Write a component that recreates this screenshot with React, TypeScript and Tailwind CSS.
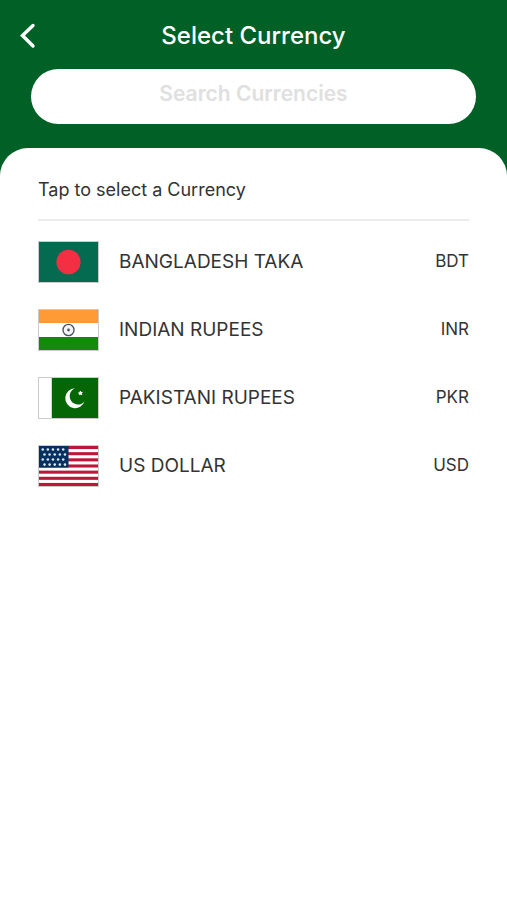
import type { ReactNode } from "react";

interface Currency {
  code: string;
  name: string;
  flag: ReactNode;
}

function BangladeshFlag() {
  return (
    <svg viewBox="0 0 60 40" preserveAspectRatio="none" className="block h-full w-full" aria-hidden="true">
      <rect width="60" height="40" fill="#056b50" />
      <circle cx="30" cy="20" r="12.3" fill="#f42f44" />
    </svg>
  );
}

function IndiaFlag() {
  return (
    <svg viewBox="0 0 60 40" preserveAspectRatio="none" className="block h-full w-full" aria-hidden="true">
      <rect width="60" height="40" fill="#fff" />
      <rect width="60" height="13" fill="#ff9a35" />
      <rect y="27" width="60" height="13" fill="#148a0c" />
      <circle cx="30" cy="20" r="5.6" fill="#f4f5f8" stroke="#4b5462" strokeWidth="1.4" />
      <circle cx="30" cy="20" r="1.4" fill="#4b5462" />
    </svg>
  );
}

function PakistanFlag() {
  return (
    <svg viewBox="0 0 60 40" preserveAspectRatio="none" className="block h-full w-full" aria-hidden="true">
      <rect width="60" height="40" fill="#fff" />
      <rect x="13" width="47" height="40" fill="#046604" />
      <path
        d="M36.5 10.3A10 10 0 1 0 46.3 23.2A8.4 8.4 0 1 1 36.5 10.3Z"
        fill="#fff"
      />
      <path
        d="M42 13.2l.6 1.3 1.4-.2-1 1 .6 1.3-1.3-.6-1 1 .2-1.4-1.3-.6 1.4-.2z"
        fill="#fff"
        stroke="#fff"
        strokeWidth="1"
      />
    </svg>
  );
}

const stripes = [0, 1, 2, 3, 4, 5, 6];
const starRows = [0, 1, 2, 3];
const starCols = [0, 1, 2, 3, 4];

function UsFlag() {
  return (
    <svg viewBox="0 0 60 39" preserveAspectRatio="none" className="block h-full w-full" aria-hidden="true">
      <rect width="60" height="39" fill="#fff" />
      {stripes.map((i) => (
        <rect key={i} y={i * 6} width="60" height="3" fill="#bb1738" />
      ))}
      <rect width="30" height="21" fill="#06305f" />
      {starRows.map((row) =>
        starCols.map((col) => (
          <circle
            key={`${row}-${col}`}
            cx={3.8 + col * 5.2 + (row % 2) * 1.8}
            cy={3.4 + row * 4.9}
            r="1.3"
            fill="#dce6f2"
          />
        ))
      )}
    </svg>
  );
}

const currencies: Currency[] = [
  { code: "BDT", name: "BANGLADESH TAKA", flag: <BangladeshFlag /> },
  { code: "INR", name: "INDIAN RUPEES", flag: <IndiaFlag /> },
  { code: "PKR", name: "PAKISTANI RUPEES", flag: <PakistanFlag /> },
  { code: "USD", name: "US DOLLAR", flag: <UsFlag /> },
];

export default function App() {
  return (
    <div className="flex min-h-screen flex-col bg-[#006026] font-['Inter',sans-serif] text-[#333]">
      <header className="px-[31px] pt-4 pb-6">
        <div className="-mx-4 grid h-10 grid-cols-[40px_1fr_40px] items-center">
          <button type="button" aria-label="Back" className="flex h-10 items-center">
            <svg viewBox="0 0 24 28" className="h-7 w-6" fill="none" aria-hidden="true">
              <path
                d="M18 3.5L7.5 13.5L18 24"
                stroke="#fff"
                strokeWidth="3.4"
                strokeLinecap="round"
              />
            </svg>
          </button>
          <h1 className="text-center text-2xl font-medium text-white">Select Currency</h1>
        </div>
        <input
          type="text"
          aria-label="Search Currencies"
          placeholder="Search Currencies"
          className="mt-[13px] block h-[55px] w-full rounded-full bg-white px-6 pb-1.5 text-center text-[21px] font-semibold outline-none placeholder:text-[#e0e0e0]"
        />
      </header>

      <main className="flex-1 rounded-t-[28px] bg-white px-[38px] pt-7">
        <h2 className="border-b-2 border-[#ebebeb] pb-[15px] text-lg leading-7">
          Tap to select a Currency
        </h2>
        <ul className="pt-[7px]">
          {currencies.map((currency) => (
            <li key={currency.code}>
              <button type="button" className="flex h-[68px] w-full items-center text-left">
                <span className="h-[42px] w-[61px] shrink-0 border border-[#c9cccb]">
                  {currency.flag}
                </span>
                <span className="ml-5 flex-1 text-[19px]">{currency.name}</span>
                <span className="text-[17px]">{currency.code}</span>
              </button>
            </li>
          ))}
        </ul>
      </main>
    </div>
  );
}
